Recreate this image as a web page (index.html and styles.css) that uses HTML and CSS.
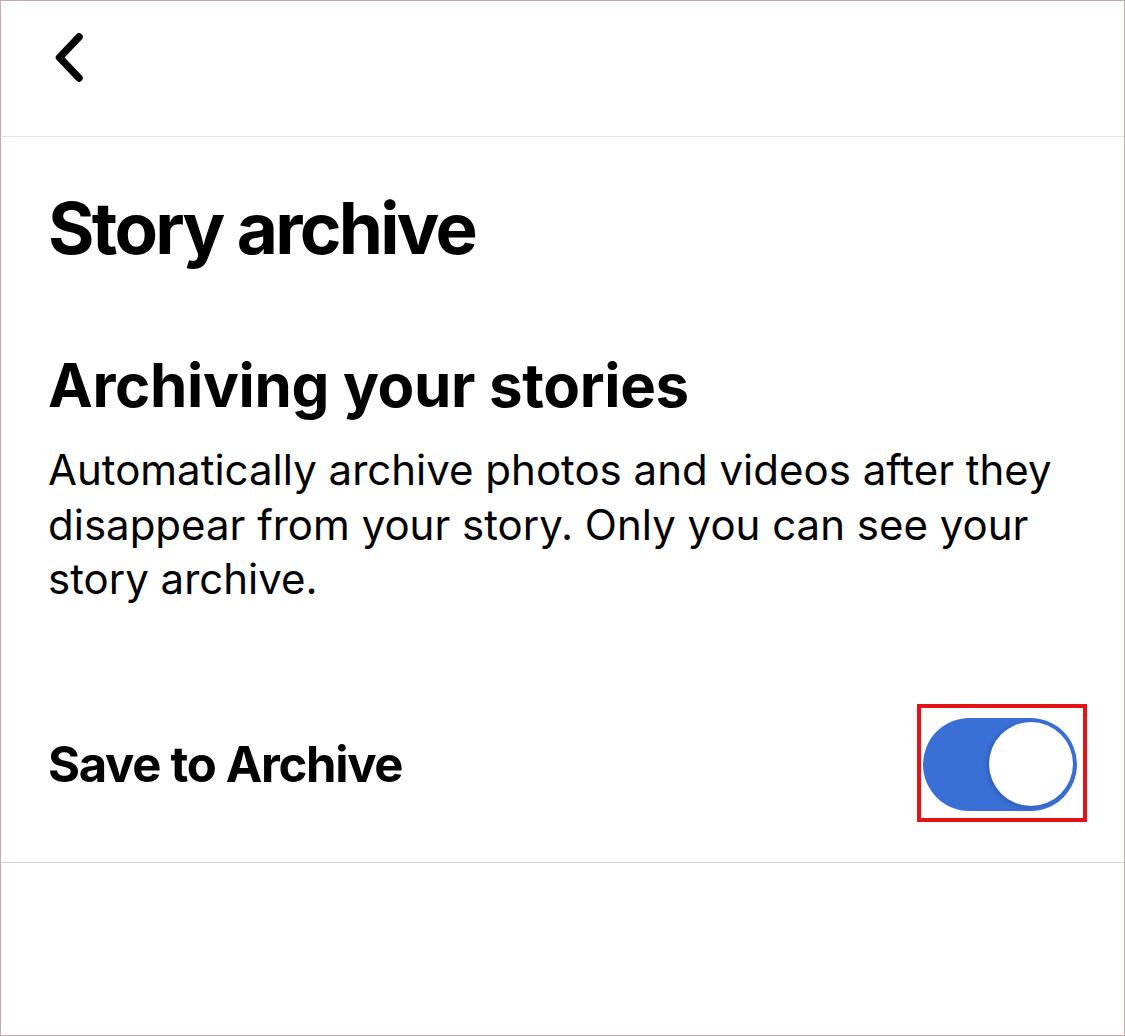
FILE: index.html
```html
<!DOCTYPE html>
<html lang="en">
<head>
    <meta charset="UTF-8">
    <meta name="viewport" content="width=device-width, initial-scale=1.0">
    <title>Story archive</title>
    <link rel="stylesheet" href="styles.css">
</head>
<body>
    <div class="screen">
        <div class="nav-bar">
            <button class="back-btn" aria-label="Back">
                <svg width="32" height="52" viewBox="0 0 32 52">
                    <path d="M25 5 L5.5 25.5 L25 46" fill="none" stroke="#000" stroke-width="7.5" stroke-linecap="round" stroke-linejoin="round"/>
                </svg>
            </button>
        </div>

        <div class="content">
            <h1 class="page-title">Story archive</h1>
            <h2 class="section-title">Archiving your stories</h2>
            <p class="section-text">Automatically archive photos and videos after they disappear from your story. Only you can see your story archive.</p>
        </div>

        <div class="setting-row">
            <span class="setting-label">Save to Archive</span>
            <div class="highlight">
                <div class="toggle on">
                    <div class="knob"></div>
                </div>
            </div>
        </div>
    </div>
</body>
</html>
```

FILE: styles.css
```css
body {
    margin: 0;
    background-color: #fff;
    font-family: Inter, "Liberation Sans", Arial, sans-serif;
    color: #000;
}
.screen {
    box-sizing: border-box;
    width: 1125px;
    height: 1036px;
    border: 1px solid #c9a9b1;
    background-color: #fff;
}
.nav-bar {
    height: 135px;
    border-bottom: 1px solid #e4e4e4;
    padding-left: 53px;
    box-sizing: content-box;
}
.back-btn {
    display: block;
    background: none;
    border: none;
    padding: 0;
    margin: 0;
    padding-top: 31px;
    cursor: pointer;
}
.back-btn svg {
    display: block;
}
.content {
    padding: 0 47px;
}
.page-title {
    font-size: 71px;
    font-weight: 650;
    line-height: 88px;
    letter-spacing: -2.7px;
    margin: 47px 0 0;
}
.section-title {
    font-size: 60px;
    font-weight: 700;
    line-height: 72px;
    letter-spacing: -0.35px;
    margin: 77px 0 0;
}
.section-text {
    font-size: 42px;
    font-weight: 400;
    line-height: 54.5px;
    letter-spacing: 0;
    margin: 22px 0 0;
}
.setting-row {
    display: flex;
    justify-content: space-between;
    align-items: center;
    padding: 97px 37px 40px 47px;
    border-bottom: 1px solid #cfcfcf;
}
.setting-label {
    font-size: 49px;
    font-weight: 700;
    letter-spacing: -1.3px;
    padding-top: 4px;
}
.highlight {
    border: 4px solid #e31419;
    padding: 10px 6px 7px 2px;
}
.toggle {
    width: 154px;
    height: 93px;
    border-radius: 47px;
    background-color: #3a6fd6;
    position: relative;
}
.toggle .knob {
    position: absolute;
    top: 4.5px;
    right: 4px;
    width: 84px;
    height: 84px;
    border-radius: 50%;
    background-color: #fff;
    box-shadow: -2px 1px 5px rgba(0, 0, 0, 0.18);
}
```
